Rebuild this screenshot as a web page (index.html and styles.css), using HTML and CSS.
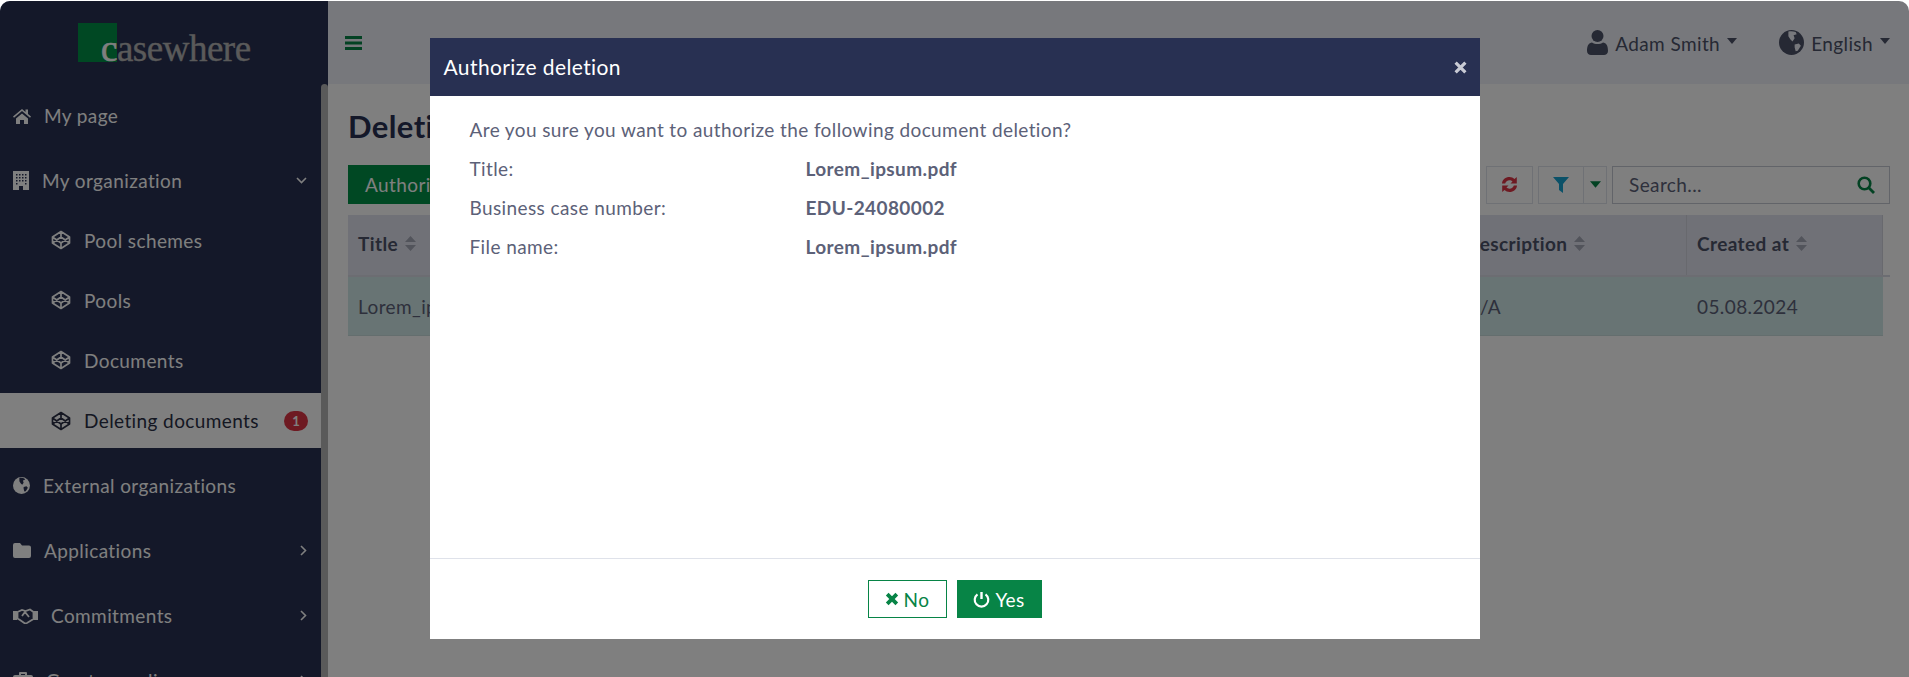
FILE: index.html
```html
<!DOCTYPE html>
<html lang="en">
<head>
    <meta charset="UTF-8">
    <title>Deleting documents</title>
    <link rel="stylesheet" href="styles.css">
</head>
<body>
    <svg class="sprite" width="0" height="0">
        <symbol id="pen" viewBox="0 0 20 20">
            <path d="M10 1.500 18.500 7v6L10 18.500 1.500 13V7zM10 1.500V7M10 13v5.500M1.500 7 10 13l8.500-6M1.500 13 10 7l8.500 6" fill="none" stroke="currentColor" stroke-width="1.700" stroke-linejoin="round"/>
        </symbol>
        <symbol id="globe" viewBox="0 0 24 24">
            <circle cx="12" cy="12" r="12" fill="currentColor"/>
            <path d="M9 1.500c2-.6 5-.5 7 .5l1 2-3 1 1 3-2 3-2-2-2-3zM15 14l4-1 2 2-3 5-2 .5-1-4z" fill="var(--globe-land)"/>
        </symbol>
        <symbol id="caret" viewBox="0 0 10 6">
            <path d="M0 0h10L5 6z" fill="currentColor"/>
        </symbol>
    </svg>

    <div class="app">
        <aside class="sidebar">
            <div class="logo">
                <span class="logo-mark"></span>
                <span class="logo-text"><b>c</b>asewhere</span>
            </div>
            <nav class="menu">
                <a class="menu-item">
                    <svg class="menu-icon" width="18" height="16" viewBox="0 0 18 16"><path d="M9 1 0 8.500l1 1.200L9 3l8 6.700 1-1.200-3-2.500V1.500h-2.500v2.400zM3 10.500 9 5.500l6 5V16h-4v-4H7v4H3z" fill="currentColor"/></svg>
                    My page
                </a>
                <a class="menu-item">
                    <svg class="menu-icon" width="16" height="19" viewBox="0 0 16 19"><path fill-rule="evenodd" d="M0 0h16v19H0zM3 3v1.500h1.500V3zm3 0v1.500h1.500V3zm3 0v1.500h1.500V3zm3 0v1.500h1.500V3zM3 6v1.500h1.500V6zm3 0v1.500h1.500V6zm3 0v1.500h1.500V6zm3 0v1.500h1.500V6zM3 9v1.500h1.500V9zm3 0v1.500h1.500V9zm3 0v1.500h1.500V9zm3 0v1.500h1.500V9zM3 12v1.500h1.500V12zm9 0v1.500h1.500V12zM6 15v4h4v-4z" fill="currentColor"/></svg>
                    My organization
                    <svg class="menu-arrow" width="11" height="7" viewBox="0 0 11 7"><path d="M1 1l4.500 4.500L10 1" fill="none" stroke="currentColor" stroke-width="1.600"/></svg>
                </a>
                <div class="menu-group">
                    <a class="menu-sub"><svg width="20" height="20"><use href="#pen"/></svg>Pool schemes</a>
                    <a class="menu-sub"><svg width="20" height="20"><use href="#pen"/></svg>Pools</a>
                    <a class="menu-sub"><svg width="20" height="20"><use href="#pen"/></svg>Documents</a>
                    <a class="menu-sub active"><svg width="20" height="20"><use href="#pen"/></svg>Deleting documents<span class="badge">1</span></a>
                </div>
                <a class="menu-item">
                    <svg class="menu-icon globe-dark" width="17" height="17"><use href="#globe"/></svg>
                    External organizations
                </a>
                <a class="menu-item">
                    <svg class="menu-icon" width="18" height="15" viewBox="0 0 18 15"><path d="M2 0h5l2 2.500h7a2 2 0 0 1 2 2V13a2 2 0 0 1-2 2H2a2 2 0 0 1-2-2V2a2 2 0 0 1 2-2z" fill="currentColor"/></svg>
                    Applications
                    <svg class="menu-arrow" width="7" height="11" viewBox="0 0 7 11"><path d="M1 1l4.500 4.500L1 10" fill="none" stroke="currentColor" stroke-width="1.600"/></svg>
                </a>
                <a class="menu-item">
                    <svg class="menu-icon" width="25" height="16" viewBox="0 0 25 16"><path d="M0 3h4v9H0zM21 3h4v9h-4z" fill="currentColor"/><path d="M4.500 4 9 2l3.500 1L17 1.500 20.500 4v7l-6.500 4-2 .5-5-3.500-2.500-1.500zM9 8l3-4 4 5" fill="none" stroke="currentColor" stroke-width="1.800"/></svg>
                    Commitments
                    <svg class="menu-arrow" width="7" height="11" viewBox="0 0 7 11"><path d="M1 1l4.500 4.500L1 10" fill="none" stroke="currentColor" stroke-width="1.600"/></svg>
                </a>
                <a class="menu-item">
                    <svg class="menu-icon" width="20" height="17" viewBox="0 0 20 17"><path fill-rule="evenodd" d="M6 3V1a1 1 0 0 1 1-1h6a1 1 0 0 1 1 1v2h4a2 2 0 0 1 2 2v10a2 2 0 0 1-2 2H2a2 2 0 0 1-2-2V5a2 2 0 0 1 2-2zm2-1v1h4V2z" fill="currentColor"/></svg>
                    Grant compliance
                    <svg class="menu-arrow" width="7" height="11" viewBox="0 0 7 11"><path d="M1 1l4.500 4.500L1 10" fill="none" stroke="currentColor" stroke-width="1.600"/></svg>
                </a>
            </nav>
        </aside>

        <div class="main">
            <header class="topbar">
                <svg class="burger" width="17" height="14" viewBox="0 0 17 14"><path d="M0 0h17v3H0zM0 5.500h17v3H0zM0 11h17v3H0z" fill="currentColor"/></svg>
                <div class="topbar-right">
                    <span class="top-link">
                        <svg width="21" height="25" viewBox="0 0 21 25"><circle cx="10.500" cy="6" r="6" fill="currentColor"/><path d="M0 21c0-6 2-8 5-8.500 3 2 8 2 11 0 3 .5 5 2.500 5 8.500 0 2.500-2 4-4 4H4c-2 0-4-1.500-4-4z" fill="currentColor"/></svg>
                        <span class="top-text">Adam Smith</span>
                        <svg class="caret" width="10" height="6"><use href="#caret"/></svg>
                    </span>
                    <span class="top-link">
                        <svg class="globe-light" width="25" height="25"><use href="#globe"/></svg>
                        <span class="top-text">English</span>
                        <svg class="caret" width="10" height="6"><use href="#caret"/></svg>
                    </span>
                </div>
            </header>

            <section class="content">
                <h1 class="page-title">Deleting documents</h1>
                <div class="toolbar">
                    <button class="btn-authorize">Authorize deletion</button>
                    <div class="tools">
                        <span class="tool tool-refresh">
                            <svg width="17" height="17" viewBox="0 0 17 17"><path d="M1 7.500C1.300 3.500 4.500 1 8.500 1c2 0 3.700.8 5 2L15.800 1v6.500H9.500l2-2C10.700 4.800 9.700 4.300 8.500 4.300 6.300 4.300 4.700 5.600 4.200 7.500zM16 9.500c-.3 4-3.500 6.500-7.500 6.500-2 0-3.700-.8-5-2l-2.300 2V9.500h6.300l-2 2c.8.700 1.800 1.200 3 1.200 2.200 0 3.800-1.300 4.300-3.200z" fill="currentColor"/></svg>
                        </span>
                        <span class="tool-split">
                            <span class="tool tool-filter">
                                <svg width="16" height="16" viewBox="0 0 16 16"><path d="M0 0h16L10 7v9L6 13V7z" fill="currentColor"/></svg>
                            </span>
                            <span class="tool tool-more">
                                <svg width="11" height="7"><use href="#caret"/></svg>
                            </span>
                        </span>
                        <div class="search">
                            <span class="search-text">Search...</span>
                            <svg width="18" height="18" viewBox="0 0 18 18"><circle cx="7.500" cy="7.500" r="5.800" fill="none" stroke="currentColor" stroke-width="2.600"/><path d="M11.800 11.800 17 17" stroke="currentColor" stroke-width="2.800"/></svg>
                        </div>
                    </div>
                </div>
                <div class="table">
                    <div class="table-head">
                        <div class="cell cell-title">Title<svg class="sort" width="11" height="15" viewBox="0 0 11 15"><path d="M5.500 0 11 6H0zM5.500 15 0 9h11z" fill="currentColor"/></svg></div>
                        <div class="cell cell-desc">Description<svg class="sort" width="11" height="15" viewBox="0 0 11 15"><path d="M5.500 0 11 6H0zM5.500 15 0 9h11z" fill="currentColor"/></svg></div>
                        <div class="cell cell-date">Created at<svg class="sort" width="11" height="15" viewBox="0 0 11 15"><path d="M5.500 0 11 6H0zM5.500 15 0 9h11z" fill="currentColor"/></svg></div>
                    </div>
                    <div class="table-row">
                        <div class="cell cell-title">Lorem_ipsum.pdf</div>
                        <div class="cell cell-desc">N/A</div>
                        <div class="cell cell-date">05.08.2024</div>
                    </div>
                </div>
            </section>
        </div>

        <div class="backdrop">
            <div class="modal">
                <div class="modal-header">
                    <span class="modal-title">Authorize deletion</span>
                    <svg class="modal-close" width="13" height="13" viewBox="0 0 12 12"><path d="M1.500 1.500l9 9M10.500 1.500l-9 9" stroke="currentColor" stroke-width="3"/></svg>
                </div>
                <div class="modal-body">
                    <p class="modal-line">Are you sure you want to authorize the following document deletion?</p>
                    <div class="modal-row"><span class="modal-label">Title:</span><b>Lorem_ipsum.pdf</b></div>
                    <div class="modal-row"><span class="modal-label">Business case number:</span><b>EDU-24080002</b></div>
                    <div class="modal-row"><span class="modal-label">File name:</span><b>Lorem_ipsum.pdf</b></div>
                </div>
                <div class="modal-footer">
                    <button class="btn btn-no">
                        <svg width="14" height="14" viewBox="0 0 14 14"><path d="M2.200 2.200l9.600 9.600M11.800 2.200l-9.600 9.600" stroke="currentColor" stroke-width="3.800"/></svg>
                        No
                    </button>
                    <button class="btn btn-yes">
                        <svg width="17" height="17" viewBox="0 0 17 17"><path d="M8.500 1v7" stroke="currentColor" stroke-width="2.400"/><path d="M4.500 3.300a6.800 6.800 0 1 0 8 0" fill="none" stroke="currentColor" stroke-width="2.200"/></svg>
                        Yes
                    </button>
                </div>
            </div>
        </div>
    </div>
</body>
</html>
```

FILE: styles.css
```css
:root {
    --navy: #283052;
    --green: #078446;
    --green-deep: #009046;
    --text: #5c6178;
    --line: #dfe2ea;
}

* {
    box-sizing: border-box;
}

html, body {
    height: 100%;
}

body {
    margin: 0;
    background: #fff;
    font-family: Lato, sans-serif;
    font-size: 19px;
    letter-spacing: 0.4px;
    color: var(--text);
    overflow: hidden;
}

.sprite {
    display: none;
}

.app {
    position: relative;
    display: flex;
    height: 676px;
    margin-top: 1px;
    border-radius: 10px 10px 0 0;
    overflow: hidden;
}

/* sidebar */
.sidebar {
    flex: 0 0 328px;
    height: 100%;
    background: var(--navy);
    overflow: hidden;
    position: relative;
}

.sidebar::after {
    content: "";
    position: absolute;
    top: 83px;
    right: 0;
    bottom: 0;
    width: 7px;
    border-radius: 4px 4px 0 0;
    background: #b4b4b4;
}

.logo {
    display: flex;
    height: 83px;
    padding: 22px 0 0 78px;
    position: relative;
}

.logo-mark {
    width: 39px;
    height: 39px;
    background: var(--green-deep);
}

.logo-text {
    position: absolute;
    left: 101px;
    top: 26px;
    font-family: "Liberation Serif", serif;
    font-size: 37px;
    line-height: 44px;
    letter-spacing: -0.5px;
    color: #b4b4b4;
    -webkit-text-stroke: 0.4px #b4b4b4;
}

.logo-text b {
    font-weight: 400;
    color: #fff;
    -webkit-text-stroke: 0.7px #fff;
}

.menu {
    display: flex;
    flex-direction: column;
    width: 321px;
    color: #fff;
}

.menu-item {
    display: flex;
    align-items: center;
    gap: 13px;
    height: 65px;
    padding: 0 14px 2px 13px;
    white-space: nowrap;
}

.menu-arrow {
    margin-left: auto;
}

.menu-group {
    margin: -4px 0 4px;
}

.menu-sub {
    display: flex;
    align-items: center;
    gap: 13px;
    height: 60px;
    padding-left: 51px;
    padding-right: 13px;
    white-space: nowrap;
}

.menu-sub.active {
    height: 55px;
    margin: 3px 0 2px;
    background: #fff;
    color: #2a2f45;
}

.badge {
    margin-left: auto;
    width: 24px;
    height: 20px;
    border-radius: 10px;
    background: #dc3545;
    color: #fff;
    font-size: 13px;
    font-weight: 700;
    line-height: 20px;
    letter-spacing: 0;
    text-align: center;
}

.globe-dark {
    --globe-land: var(--navy);
}

.globe-light {
    --globe-land: #eff1f9;
}

/* main area */
.main {
    flex: 1;
    min-width: 0;
    display: flex;
    flex-direction: column;
}

.topbar {
    display: flex;
    align-items: center;
    justify-content: space-between;
    height: 83px;
    padding: 0 19px 0 17px;
    background: #eff1f9;
}

.burger {
    color: var(--green);
}

.topbar-right {
    display: flex;
    gap: 42px;
}

.top-link {
    display: flex;
    align-items: center;
    gap: 7px;
    color: #4c5268;
}

.top-text {
    margin-top: 2px;
}

.caret {
    margin-top: -3px;
}

.content {
    flex: 1;
    padding: 22px 19px 0 20px;
    background: #fff;
}

.page-title {
    margin: 0 0 19px;
    font-size: 31px;
    line-height: 40px;
    font-weight: 700;
    color: var(--navy);
    white-space: nowrap;
}

.toolbar {
    display: flex;
    justify-content: space-between;
    align-items: center;
    height: 39px;
}

.btn-authorize {
    height: 39px;
    padding: 0 17px;
    border: 0;
    background: var(--green-deep);
    color: #fff;
    font: inherit;
    letter-spacing: inherit;
}

.tools {
    display: flex;
    gap: 5px;
    height: 38px;
}

.tool {
    display: flex;
    align-items: center;
    justify-content: center;
    height: 38px;
    border: 1px solid var(--line);
}

.tool-refresh {
    width: 47px;
    color: #dc3545;
}

.tool-split {
    display: flex;
}

.tool-filter {
    width: 46px;
    color: #17a2d0;
}

.tool-more {
    width: 23px;
    border-left: 0;
    color: var(--green);
}

.search {
    display: flex;
    align-items: center;
    justify-content: space-between;
    width: 278px;
    padding: 0 14px 0 16px;
    border: 1px solid #c4c8d2;
    color: var(--green);
}

.search-text {
    color: var(--text);
}

.table {
    margin-top: 11px;
}

.table-head {
    display: flex;
    height: 62px;
    border-bottom: 2px solid #d8dbe4;
    font-weight: 700;
    color: #4c5268;
}

.table-head .cell {
    background: #e0e2ee;
    padding-bottom: 3px;
}

.table-row {
    display: flex;
    height: 59px;
    margin-right: 7px;
    border-bottom: 1px solid #c8dcdc;
    background: #d0e8e8;
}

.cell {
    display: flex;
    align-items: center;
    gap: 7px;
    padding: 0 10px;
}

.cell-title {
    width: 1107px;
}

.cell-desc {
    width: 231px;
}

.cell-date {
    width: 197px;
    border-left: 1px solid #d0d3dc;
    border-right: 1px solid #d0d3dc;
}

.table-row .cell-date {
    border-color: transparent;
}

.sort {
    color: #a4a8b6;
}

/* dialog */
.backdrop {
    position: absolute;
    inset: 0;
    display: flex;
    justify-content: center;
    align-items: flex-start;
    padding-top: 37px;
    background: rgba(0, 0, 0, 0.5);
}

.modal {
    display: flex;
    flex-direction: column;
    width: 1050px;
    height: 601px;
    background: #fff;
}

.modal-header {
    display: flex;
    align-items: center;
    justify-content: space-between;
    height: 58px;
    padding: 0 13px 0 14px;
    background: var(--navy);
    color: #fff;
}

.modal-title {
    font-size: 21px;
    margin-top: -2px;
}

.modal-close {
    color: #c8cad4;
}

.modal-body {
    flex: 1;
    padding: 18px 40px;
}

.modal-line {
    margin: 0 0 3px;
    line-height: 32px;
}

.modal-row {
    display: flex;
    height: 39px;
    align-items: center;
}

.modal-label {
    width: 336px;
}

.modal-footer {
    display: flex;
    justify-content: center;
    gap: 10px;
    height: 81px;
    padding-top: 21px;
    border-top: 1px solid var(--line);
}

.btn {
    display: flex;
    align-items: center;
    justify-content: center;
    gap: 5px;
    height: 38px;
    border: 1px solid var(--green);
    font: inherit;
    letter-spacing: inherit;
}

.btn-no {
    width: 79px;
    background: #fff;
    color: var(--green);
}

.btn-yes {
    width: 85px;
    background: var(--green);
    color: #fff;
}
```
